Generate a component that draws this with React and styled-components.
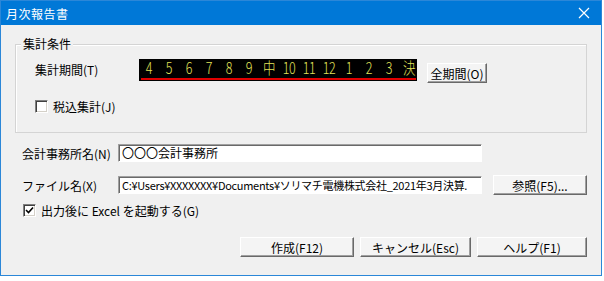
import React from 'react'
import styled, {createGlobalStyle} from 'styled-components'

const GlobalStyle = createGlobalStyle`
  html, body {
    margin: 0;
    padding: 0;
    background: #ffffff;
  }
  body {
    font-family: "Noto Sans CJK JP", "Liberation Sans", sans-serif;
    font-size: 12px;
    color: #000;
  }
`

const cells = ['4', '5', '6', '7', '8', '9', '中', '10', '11', '12', '1', '2', '3', '決']

function Check ({checked, children}) {
  return (
    <CheckRow>
      <CheckBox>
        {checked && (
          <svg width='9' height='9' viewBox='0 0 9 9'>
            <path d='M1 4 L3.5 6.5 L8 1.5' stroke='#000' strokeWidth='1.6' fill='none' />
          </svg>
        )}
      </CheckBox>
      <span>{children}</span>
    </CheckRow>
  )
}

export default function App () {
  return (
    <>
      <GlobalStyle />
      <Window>
        <TitleBar>
          <Title>月次報告書</Title>
          <Close>
            <svg width='12' height='12' viewBox='0 0 12 12'>
              <path d='M1 1 L11 11 M11 1 L1 11' stroke='#fff' strokeWidth='1.2' />
            </svg>
          </Close>
        </TitleBar>
        <Body>
          <GroupBox>
            <Legend>集計条件</Legend>
            <PeriodRow>
              <PeriodLabel>集計期間(T)</PeriodLabel>
              <PeriodBar>
                {cells.map((c, i) => (
                  <PeriodCell key={i}>{c}</PeriodCell>
                ))}
              </PeriodBar>
              <Button $w={60} $mt={4}>全期間(O)</Button>
            </PeriodRow>
            <GroupCheck>
              <Check>税込集計(J)</Check>
            </GroupCheck>
          </GroupBox>

          <FieldRow $mt={10}>
            <FieldLabel>会計事務所名(N)</FieldLabel>
            <TextField>〇〇〇会計事務所</TextField>
          </FieldRow>
          <FieldRow $mt={12}>
            <FieldLabel>ファイル名(X)</FieldLabel>
            <TextField $small>C:¥Users¥XXXXXXX¥Documents¥ソリマチ電機株式会社_2021年3月決算.</TextField>
            <Button $w={94} $ml={11}>参照(F5)...</Button>
          </FieldRow>

          <OptionRow>
            <Check checked>出力後に Excel を起動する(G)</Check>
          </OptionRow>

          <ButtonBar>
            <Button $w={114}>作成(F12)</Button>
            <Button $w={111}>キャンセル(Esc)</Button>
            <Button $w={110}>ヘルプ(F1)</Button>
          </ButtonBar>
        </Body>
      </Window>
    </>
  )
}

const Window = styled.div`
  width: 600px;
  height: 274px;
  border: 1px solid #2b87d8;
  background: #f0f0f0;
  display: flex;
  flex-direction: column;
`

const TitleBar = styled.div`
  height: 24px;
  background: #0078d7;
  display: flex;
  align-items: center;
  justify-content: space-between;
  padding: 0 11px 0 5px;
  flex-shrink: 0;
`

const Title = styled.span`
  color: #fff;
  font-size: 12px;
  letter-spacing: 0.5px;
`

const Close = styled.span`
  display: flex;
  align-items: center;
`

const Body = styled.div`
  padding: 19px 14px 0 14px;
  display: flex;
  flex-direction: column;
`

const GroupBox = styled.div`
  position: relative;
  border: 1px solid #d4d4d4;
  box-shadow: inset 1px 1px 0 #fff;
  padding: 14px 0 0 19px;
  box-sizing: border-box;
  height: 89px;
`

const Legend = styled.span`
  position: absolute;
  top: -9px;
  left: 5px;
  padding: 0 2px;
  background: #f0f0f0;
  line-height: 16px;
`

const PeriodRow = styled.div`
  display: flex;
  align-items: flex-start;
`

const PeriodLabel = styled.div`
  width: 104px;
  height: 22px;
  line-height: 22px;
  flex-shrink: 0;
`

const PeriodBar = styled.div`
  width: 278px;
  height: 22px;
  background: #000;
  display: flex;
  position: relative;
  margin-right: 10px;
  &::after {
    content: '';
    position: absolute;
    left: 2px;
    right: 1px;
    bottom: 1px;
    height: 2px;
    background: #e00000;
  }
`

const PeriodCell = styled.span`
  width: 20px;
  flex-shrink: 0;
  text-align: center;
  color: #e4e45a;
  font-size: 16px;
  font-weight: 300;
  line-height: 22px;
  transform: scaleX(0.78);
  margin-top: -3px;
  letter-spacing: -0.5px;
`

const GroupCheck = styled.div`
  margin-top: 16px;
`

const CheckRow = styled.label`
  display: flex;
  align-items: center;
  gap: 5px;
  height: 14px;
`

const CheckBox = styled.span`
  width: 11px;
  height: 11px;
  background: #fff;
  border: 1px solid;
  border-color: #808080 #fff #fff #808080;
  box-shadow: inset 1px 1px 0 #404040, inset -1px -1px 0 #d4d0c8;
  display: flex;
  align-items: center;
  justify-content: center;
  flex-shrink: 0;
`

const FieldRow = styled.div`
  display: flex;
  align-items: center;
  height: 20px;
  margin-top: ${p => p.$mt || 0}px;
  padding-left: 7px;
`

const FieldLabel = styled.div`
  width: 96px;
  flex-shrink: 0;
`

const TextField = styled.div`
  width: 364px;
  height: 18px;
  box-sizing: border-box;
  background: #fff;
  border: 1px solid;
  border-color: #a0a0a0 #fff #fff #a0a0a0;
  box-shadow: inset 1px 1px 0 #696969;
  padding: 0 3px;
  line-height: 16px;
  font-size: ${p => (p.$small ? 11 : 12)}px;
  white-space: nowrap;
  overflow: hidden;
  letter-spacing: ${p => (p.$small ? '-0.3px' : '0')};
`

const Button = styled.div`
  width: ${p => p.$w}px;
  height: 20px;
  margin-top: ${p => p.$mt || 0}px;
  margin-left: ${p => p.$ml || 0}px;
  box-sizing: border-box;
  flex-shrink: 0;
  background: #f4f4f4;
  border: 1px solid;
  border-color: #fff #696969 #696969 #fff;
  box-shadow: inset -1px -1px 0 #a0a0a0;
  display: flex;
  align-items: center;
  justify-content: center;
  font-size: 12px;
`

const OptionRow = styled.div`
  margin-top: 8px;
  padding-left: 8px;
`

const ButtonBar = styled.div`
  display: flex;
  justify-content: flex-end;
  gap: 6px;
  margin-top: 20px;
`
